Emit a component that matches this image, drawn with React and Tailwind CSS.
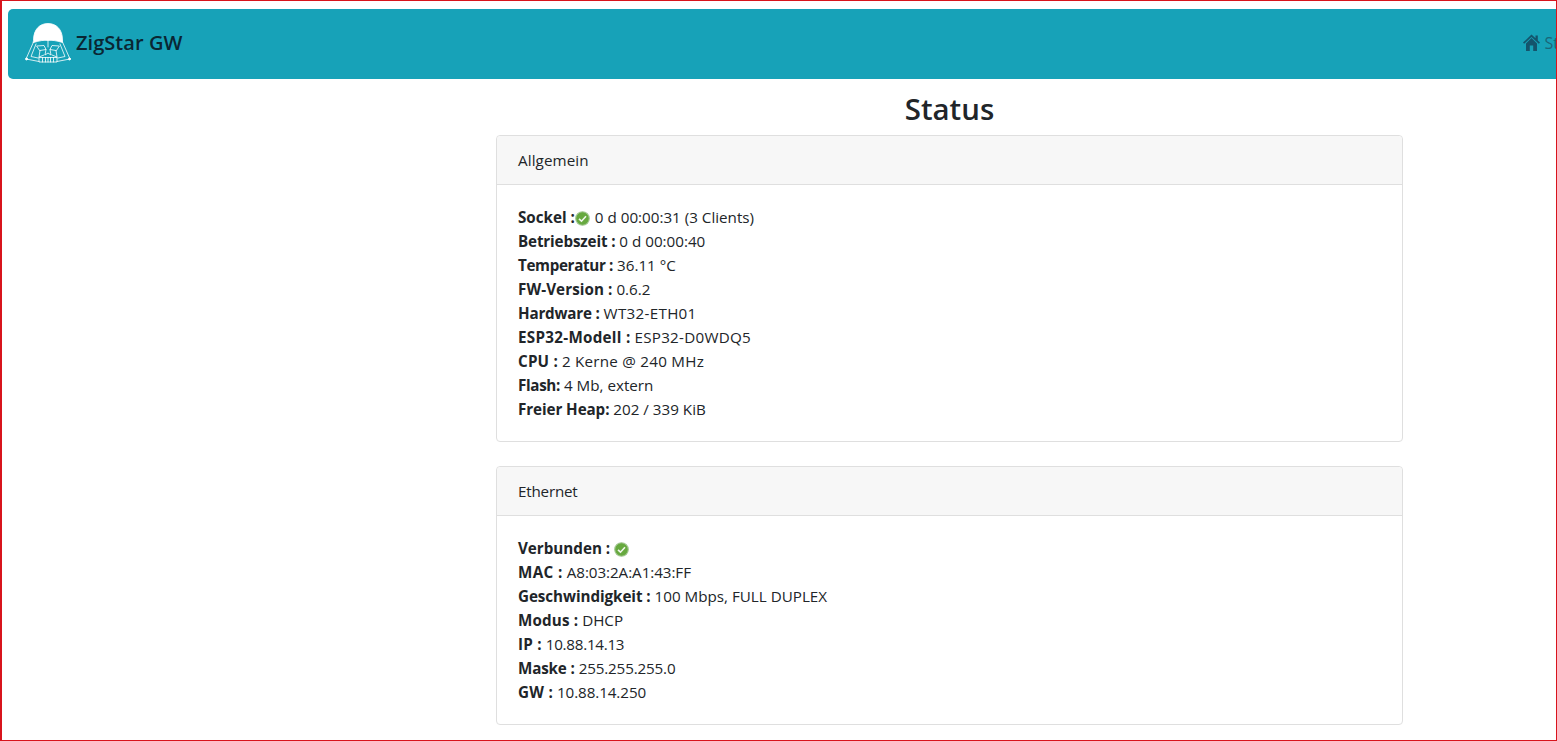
import React from "react";

function Logo() {
  return (
    <svg width="46" height="40" viewBox="0 0 46 40" fill="none" stroke="#ffffff" strokeWidth="0.8" strokeLinejoin="round" strokeLinecap="round" className="shrink-0">
      <path d="M8.5 17 C8.5 6 15 0.5 23 0.5 C31 0.5 37.5 6 37.5 17 L37.5 19.5 C31 17.5 27 17 23 17.5 C19 17 15 17.5 8.5 19.5 Z" fill="#ffffff" />
      <path d="M8.5 19 L1 36 L14 38.5 M37.5 19 L45 36 L32 38.5" />
      <path d="M11 21 L6 33.5 L13 35 M35 21 L40 33.5 L33 35" />
      <path d="M12 23 L19 22.5 L21 26.5 L15 27.5 Z M34 23 L27 22.5 L25 26.5 L31 27.5 Z" />
      <path d="M23 18 L23 24 M21 26.5 L20 32 L23 30 L26 32 L25 26.5" />
      <path d="M15 27.5 L14 34 L19 32 M31 27.5 L32 34 L27 32" />
      <path d="M14 34.5 L14 39 L32 39 L32 34.5 M14 34.5 L32 34.5 M17.5 34.5 L17.5 39 M20.5 34.5 L20.5 39 M23 34.5 L23 39 M25.5 34.5 L25.5 39 M28.5 34.5 L28.5 39" />
      <circle cx="1.5" cy="36" r="1" fill="#ffffff" />
      <circle cx="44.5" cy="36" r="1" fill="#ffffff" />
    </svg>
  );
}

function HomeIcon() {
  return (
    <svg width="17" height="17" viewBox="0 0 17 17" fill="#14546c" className="shrink-0">
      <path d="M0 8.6 L8.5 0.5 L12.5 4.3 L12.5 1.5 L14.8 1.5 L14.8 6.5 L17 8.6 L15.8 9.8 L8.5 3 L1.2 9.8 Z" />
      <path d="M3 9.5 L8.5 4 L14 9.5 L14 17 L10.2 17 L10.2 11.5 L6.8 11.5 L6.8 17 L3 17 Z" />
    </svg>
  );
}

function Check() {
  return (
    <svg width="15" height="15" viewBox="0 0 15 15" className="inline-block align-[-3px]">
      <circle cx="7.5" cy="7.5" r="6.8" fill="#67a93f" stroke="#a3c793" strokeWidth="1.1" />
      <path d="M4 7.8 L6.5 10.2 L11 5.2" fill="none" stroke="#f1f6ee" strokeWidth="1.6" />
    </svg>
  );
}

function Row({ label, value, icon, lc, vc }) {
  return (
    <div className="h-6 whitespace-nowrap">
      <b className={"font-bold " + (lc || "")}>{label}</b>
      {icon}
      {" "}
      <span className={vc || ""}>{value}</span>
    </div>
  );
}

function Card({ title, tc, children }) {
  return (
    <section className="border border-[#dfdfdf] rounded-[4px] mb-6 bg-white">
      <div className="h-[49px] px-[21px] flex items-center bg-[#f7f7f7] border-b border-[#dfdfdf] rounded-t-[4px]">
        <span className={tc}>{title}</span>
      </div>
      <div className="py-5 px-[21px]">{children}</div>
    </section>
  );
}

export default function App() {
  return (
    <div className="w-[1557px] h-[741px] overflow-hidden border border-l-2 border-[#d8141c] text-[15.2px] leading-6 text-[#212529] bg-white" style={{ fontFamily: '"Open Sans", "Noto Sans", sans-serif' }}>
      <nav className="ml-[6px] mt-2 w-[1700px] h-[70px] pb-[3px] bg-[#17a2b8] rounded-[5px] flex items-center pl-[17px]">
        <Logo />
        <span className="ml-[5px] text-[20px] font-semibold tracking-[0.05px] text-[#0a2633]">ZigStar GW</span>
        <span className="ml-[1341px] flex items-center gap-[4px] text-[#1a6679] text-[16px]">
          <HomeIcon />
          Status
        </span>
      </nav>
      <main className="ml-[494px] w-[907px]">
        <h1 className="h-[56px] pt-[10px] text-center text-[29.4px] leading-[40px] font-semibold">Status</h1>
        <Card title="Allgemein" tc="tracking-[0.1px]">
          <Row label="Sockel :" icon={<Check />} value="0 d 00:00:31 (3 Clients)" vc="ml-[1px]" />
          <Row label="Betriebszeit :" lc="tracking-[-0.14px]" value="0 d 00:00:40" />
          <Row label="Temperatur :" lc="tracking-[-0.33px]" value="36.11 °C" />
          <Row label="FW-Version :" lc="tracking-[0.08px]" value="0.6.2" />
          <Row label="Hardware :" lc="tracking-[-0.2px]" vc="tracking-[0.3px]" value="WT32-ETH01" />
          <Row label="ESP32-Modell :" lc="tracking-[0.29px]" vc="tracking-[0.25px]" value="ESP32-D0WDQ5" />
          <Row label="CPU :" lc="tracking-[0.2px]" vc="tracking-[0.24px]" value="2 Kerne @ 240 MHz" />
          <Row label="Flash:" lc="tracking-[-0.33px]" value="4 Mb, extern" />
          <Row label="Freier Heap:" lc="tracking-[-0.08px]" value="202 / 339 KiB" />
        </Card>
        <Card title="Ethernet" tc="tracking-[-0.2px]">
          <Row label="Verbunden : " icon={<Check />} value="" />
          <Row label="MAC :" lc="tracking-[0.4px]" vc="tracking-[-0.06px]" value="A8:03:2A:A1:43:FF" />
          <Row label="Geschwindigkeit :" lc="tracking-[-0.06px]" value="100 Mbps, FULL DUPLEX" />
          <Row label="Modus :" lc="tracking-[0.15px]" value="DHCP" />
          <Row label="IP :" lc="tracking-[0.25px]" vc="tracking-[-0.27px]" value="10.88.14.13" />
          <Row label="Maske :" lc="tracking-[-0.15px]" vc="tracking-[-0.15px]" value="255.255.255.0" />
          <Row label="GW :" lc="tracking-[0.25px]" vc="tracking-[-0.08px]" value="10.88.14.250" />
        </Card>
      </main>
    </div>
  );
}
